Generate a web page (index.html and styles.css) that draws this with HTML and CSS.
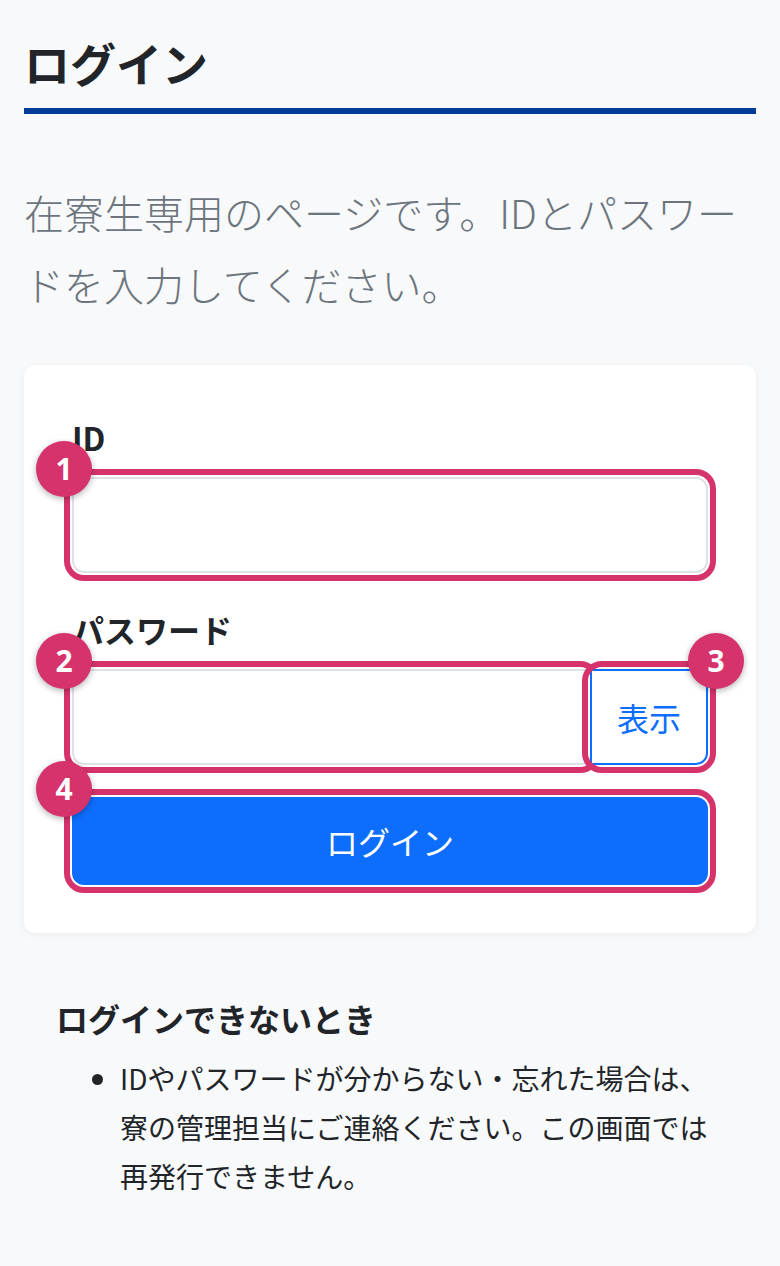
FILE: index.html
```html
<!DOCTYPE html>
<html lang="ja">
<head>
<meta charset="utf-8">
<title>ログイン</title>
<link rel="stylesheet" href="styles.css">
</head>
<body>
<main class="page">
  <h1 class="title">ログイン</h1>
  <p class="lead">在寮生専用のページです。IDとパスワードを入力してください。</p>

  <form class="card">
    <div class="group">
      <label class="label" for="uid">ID</label>
      <span class="field">
        <input class="input" id="uid" type="text">
        <span class="hl"></span>
        <span class="badge badge-left">1</span>
      </span>
    </div>

    <div class="group">
      <label class="label" for="pw">パスワード</label>
      <div class="input-group">
        <span class="field field-grow">
          <input class="input input-left" id="pw" type="password">
          <span class="hl"></span>
          <span class="badge badge-left">2</span>
        </span>
        <span class="field field-btn">
          <button class="btn-show" type="button">表示</button>
          <span class="hl"></span>
          <span class="badge badge-right">3</span>
        </span>
      </div>
    </div>

    <span class="field">
      <button class="btn-login" type="button">ログイン</button>
      <span class="hl"></span>
      <span class="badge badge-left">4</span>
    </span>
  </form>

  <section class="help">
    <h2 class="help-title">ログインできないとき</h2>
    <ul class="help-list">
      <li>IDやパスワードが分からない・忘れた場合は、寮の管理担当にご連絡ください。この画面では再発行できません。</li>
    </ul>
  </section>
</main>
</body>
</html>
```

FILE: styles.css
```css
* { box-sizing: border-box; }

html, body {
  margin: 0;
  padding: 0;
  background: #f8f9fa;
}

body {
  font-family: "Noto Sans CJK JP", "Noto Sans", sans-serif;
  color: #212529;
}

.page {
  padding: 0 24px;
}

.title {
  margin: 33px 0 0;
  padding-bottom: 17px;
  font-size: 46px;
  line-height: 58px;
  font-weight: 700;
  color: #212529;
  border-bottom: 6px solid #003d98;
}

.lead {
  margin: 62px 0 45px;
  font-size: 40px;
  line-height: 72px;
  font-weight: 300;
  color: #6c757d;
}

.card {
  display: block;
  background: #fff;
  border-radius: 12px;
  padding: 48px;
  box-shadow: 0 2px 8px rgba(0, 0, 0, 0.05);
}

.group {
  margin-bottom: 32px;
}

.label {
  display: block;
  margin-bottom: 16px;
  font-size: 32px;
  line-height: 48px;
  font-weight: 700;
}

.field {
  position: relative;
  display: block;
}

.input {
  display: block;
  width: 100%;
  height: 96px;
  border: 2px solid #dee2e6;
  border-radius: 12px;
  background: #fff;
  font-size: 32px;
  padding: 0 24px;
  font-family: inherit;
}

.input-group {
  display: flex;
}

.field-grow {
  flex: 1;
  min-width: 0;
}

.input-left {
  border-radius: 12px 0 0 12px;
}

.field-btn {
  margin-left: -2px;
}

.btn-show {
  display: block;
  height: 96px;
  padding: 0 25px;
  border: 2px solid #0d6efd;
  border-radius: 0 12px 12px 0;
  background: #fff;
  color: #0d6efd;
  font-family: inherit;
  font-size: 32px;
  line-height: 1;
}

.btn-login {
  display: block;
  width: 100%;
  height: 88px;
  border: none;
  border-radius: 12px;
  background: #0d6efd;
  color: #fff;
  font-family: inherit;
  font-size: 32px;
  line-height: 1;
}

.hl {
  position: absolute;
  top: -8px;
  right: -8px;
  bottom: -8px;
  left: -8px;
  border: 6px solid #d6336c;
  border-radius: 20px;
  pointer-events: none;
}

.badge {
  position: absolute;
  top: -36px;
  width: 56px;
  height: 56px;
  border-radius: 50%;
  background: #d6336c;
  color: #fff;
  font-family: "Noto Sans", sans-serif;
  font-size: 30px;
  font-weight: 700;
  line-height: 56px;
  text-align: center;
  box-shadow: 0 2px 6px rgba(0, 0, 0, 0.3);
  z-index: 2;
}

.badge-left { left: -36px; }
.badge-right { right: -36px; }

.help {
  padding: 0 32px;
  margin-top: 61px;
}

.help-title {
  margin: 0 0 12px;
  font-size: 32px;
  line-height: 48px;
  font-weight: 700;
}

.help-list {
  margin: 0;
  padding-left: 64px;
  font-size: 28px;
  line-height: 49px;
}
```
